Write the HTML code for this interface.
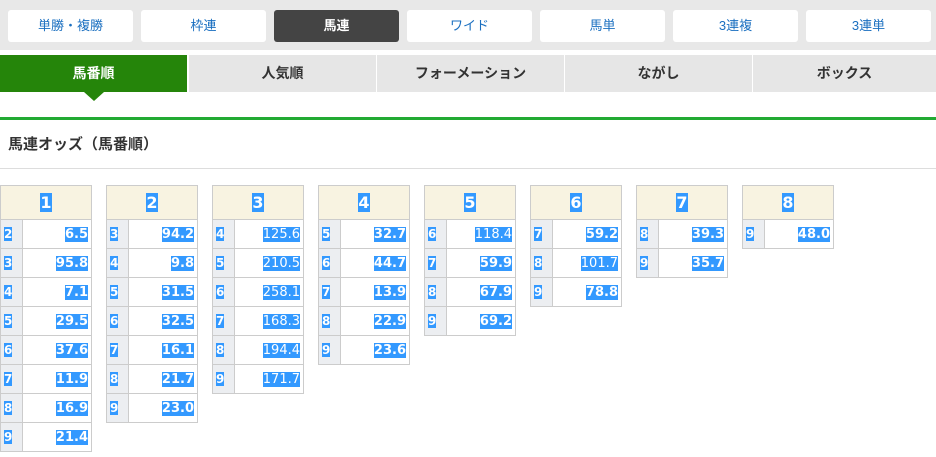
<!DOCTYPE html><html><head><meta charset="utf-8"><style>
body{margin:0;width:936px;height:457px;overflow:hidden;background:#fff;font-family:"Liberation Sans","Noto Sans CJK JP",sans-serif;}
.top{position:absolute;left:0;top:0;width:936px;height:50px;background:#e8e8e8}
.b{position:absolute;top:10px;width:125px;height:32px;background:#fff;border-radius:3px;color:#1a6fc0;font-size:13px;line-height:32px;text-align:center}
.b.on{background:#444;color:#fff;font-weight:bold}
.tabs{position:absolute;top:55px;left:0;width:936px;height:37px}
.t{position:absolute;top:0;height:37px;width:187px;background:#e6e6e6;color:#333;font-weight:bold;font-size:14px;line-height:37px;text-align:center}
.t.on{background:#25850a;color:#fff}
.tri{position:absolute;left:84px;top:92px;border-left:10px solid transparent;border-right:10px solid transparent;border-top:9px solid #25850a}
.gl{position:absolute;left:0;top:117px;width:936px;height:3px;background:#22aa33}
h2{position:absolute;left:8px;top:133px;margin:0;font-size:15px;color:#333}
.hl{position:absolute;left:0;top:168px;width:936px;height:1px;background:#ddd}
table{position:absolute;top:185px;width:92px;border-collapse:collapse;font-size:13px;font-family:"DejaVu Sans",sans-serif}
td{border:1px solid #ccc;height:28px;padding:0}
th{border:1px solid #ccc;background:#f8f3e1;height:31px;font-size:16px}
td.n{width:18px;background:#eceef1;text-align:left;padding-left:3px;font-weight:bold;font-size:12px}
td.v{text-align:right;padding-right:3px;font-weight:bold}
td.v.l{font-weight:normal}
span{background:#3399ff;color:#fff}
</style></head><body>
<div class="top">
<div class="b" style="left:8px">単勝・複勝</div><div class="b" style="left:141px">枠連</div><div class="b on" style="left:274px">馬連</div><div class="b" style="left:407px">ワイド</div><div class="b" style="left:540px">馬単</div><div class="b" style="left:673px">3連複</div><div class="b" style="left:806px">3連単</div>
</div>
<div class="tabs">
<div class="t on" style="left:0">馬番順</div><div class="t" style="left:189px">人気順</div><div class="t" style="left:377px">フォーメーション</div><div class="t" style="left:565px">ながし</div><div class="t" style="left:753px;width:183px">ボックス</div>
</div>
<div class="tri"></div><div class="gl"></div>
<h2>馬連オッズ（馬番順）</h2><div class="hl"></div>
<table style="left:0"><tr><th colspan=2><span>1</span></th></tr>
<tr><td class=n><span>2</span></td><td class=v><span>6.5</span></td></tr>
<tr><td class=n><span>3</span></td><td class=v><span>95.8</span></td></tr>
<tr><td class=n><span>4</span></td><td class=v><span>7.1</span></td></tr>
<tr><td class=n><span>5</span></td><td class=v><span>29.5</span></td></tr>
<tr><td class=n><span>6</span></td><td class=v><span>37.6</span></td></tr>
<tr><td class=n><span>7</span></td><td class=v><span>11.9</span></td></tr>
<tr><td class=n><span>8</span></td><td class=v><span>16.9</span></td></tr>
<tr><td class=n><span>9</span></td><td class=v><span>21.4</span></td></tr></table>
<table style="left:106px"><tr><th colspan=2><span>2</span></th></tr>
<tr><td class=n><span>3</span></td><td class=v><span>94.2</span></td></tr>
<tr><td class=n><span>4</span></td><td class=v><span>9.8</span></td></tr>
<tr><td class=n><span>5</span></td><td class=v><span>31.5</span></td></tr>
<tr><td class=n><span>6</span></td><td class=v><span>32.5</span></td></tr>
<tr><td class=n><span>7</span></td><td class=v><span>16.1</span></td></tr>
<tr><td class=n><span>8</span></td><td class=v><span>21.7</span></td></tr>
<tr><td class=n><span>9</span></td><td class=v><span>23.0</span></td></tr></table>
<table style="left:212px"><tr><th colspan=2><span>3</span></th></tr>
<tr><td class=n><span>4</span></td><td class="v l"><span>125.6</span></td></tr>
<tr><td class=n><span>5</span></td><td class="v l"><span>210.5</span></td></tr>
<tr><td class=n><span>6</span></td><td class="v l"><span>258.1</span></td></tr>
<tr><td class=n><span>7</span></td><td class="v l"><span>168.3</span></td></tr>
<tr><td class=n><span>8</span></td><td class="v l"><span>194.4</span></td></tr>
<tr><td class=n><span>9</span></td><td class="v l"><span>171.7</span></td></tr></table>
<table style="left:318px"><tr><th colspan=2><span>4</span></th></tr>
<tr><td class=n><span>5</span></td><td class=v><span>32.7</span></td></tr>
<tr><td class=n><span>6</span></td><td class=v><span>44.7</span></td></tr>
<tr><td class=n><span>7</span></td><td class=v><span>13.9</span></td></tr>
<tr><td class=n><span>8</span></td><td class=v><span>22.9</span></td></tr>
<tr><td class=n><span>9</span></td><td class=v><span>23.6</span></td></tr></table>
<table style="left:424px"><tr><th colspan=2><span>5</span></th></tr>
<tr><td class=n><span>6</span></td><td class="v l"><span>118.4</span></td></tr>
<tr><td class=n><span>7</span></td><td class=v><span>59.9</span></td></tr>
<tr><td class=n><span>8</span></td><td class=v><span>67.9</span></td></tr>
<tr><td class=n><span>9</span></td><td class=v><span>69.2</span></td></tr></table>
<table style="left:530px"><tr><th colspan=2><span>6</span></th></tr>
<tr><td class=n><span>7</span></td><td class=v><span>59.2</span></td></tr>
<tr><td class=n><span>8</span></td><td class="v l"><span>101.7</span></td></tr>
<tr><td class=n><span>9</span></td><td class=v><span>78.8</span></td></tr></table>
<table style="left:636px"><tr><th colspan=2><span>7</span></th></tr>
<tr><td class=n><span>8</span></td><td class=v><span>39.3</span></td></tr>
<tr><td class=n><span>9</span></td><td class=v><span>35.7</span></td></tr></table>
<table style="left:742px"><tr><th colspan=2><span>8</span></th></tr>
<tr><td class=n><span>9</span></td><td class=v><span>48.0</span></td></tr></table>
</body></html>
